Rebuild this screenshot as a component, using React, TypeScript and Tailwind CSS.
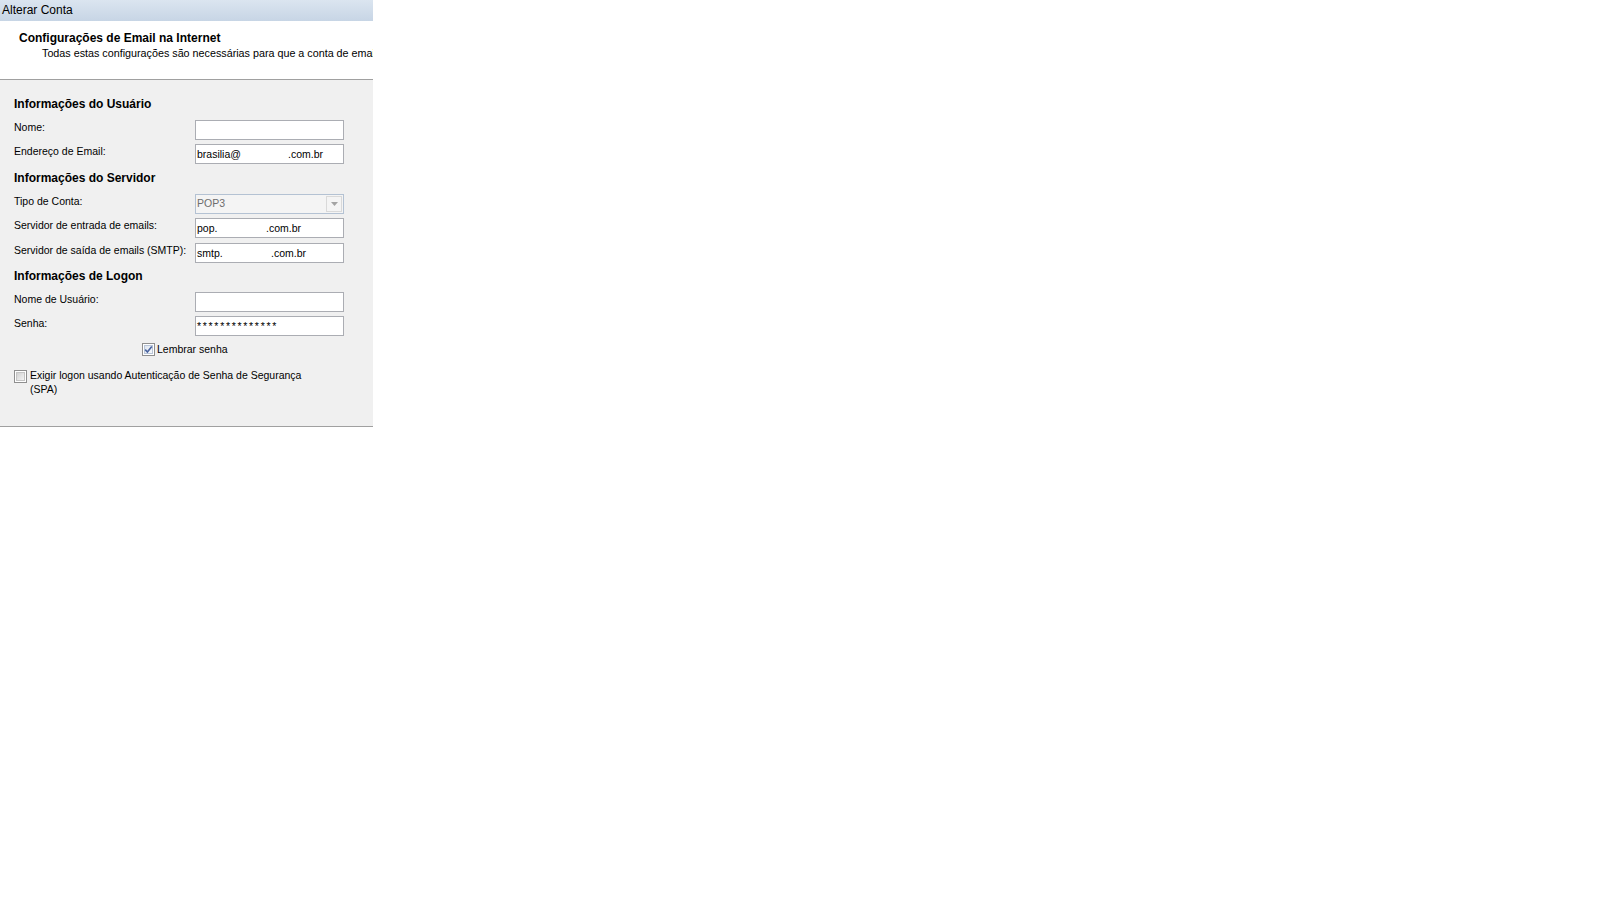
import React from 'react';

const font = { fontFamily: '"Liberation Sans", Arial, sans-serif' };

const TextBox: React.FC<{ children?: React.ReactNode; className?: string }> = ({ children, className = '' }) => (
  <div
    className={`h-[20px] w-[149px] border border-[#abadb3] bg-white pl-[1px] text-[10.5px] leading-[18px] text-black whitespace-nowrap overflow-hidden ${className}`}
  >
    {children}
  </div>
);

const SectionTitle: React.FC<{ children: React.ReactNode; className?: string }> = ({ children, className = '' }) => (
  <div className={`text-[12px] leading-[14px] font-bold text-black ${className}`}>{children}</div>
);

const Row: React.FC<{ label: string; className?: string; children: React.ReactNode }> = ({ label, className = '', children }) => (
  <div className={`flex items-start ${className}`}>
    <div className="w-[181px] text-[10.5px] leading-[14px] text-black whitespace-nowrap">{label}</div>
    {children}
  </div>
);

const CheckBox: React.FC<{ checked?: boolean }> = ({ checked }) => (
  <div className="h-[13px] w-[13px] shrink-0 border border-[#8f8f8f] bg-white p-[1px]">
    <div
      className={`relative h-full w-full border ${
        checked
          ? 'border-[#b9c5d8] bg-gradient-to-br from-[#dfe6f0] to-[#f7f9fc]'
          : 'border-[#c4c4c4] bg-gradient-to-br from-[#d2d2d2] to-[#f4f4f4]'
      }`}
    >
      {checked && (
        <svg viewBox="0 0 9 9" className="absolute -left-[1px] -top-[1px] h-[9px] w-[9px]">
          <path d="M1.2 4.6 L3.4 7 L7.8 1.4" fill="none" stroke="#4a64a0" strokeWidth="1.6" />
        </svg>
      )}
    </div>
  </div>
);

export default function App() {
  return (
    <div className="min-h-[900px] w-full bg-white" style={font}>
      <div className="w-[373px] overflow-hidden">
        {/* title bar */}
        <div className="h-[21px] bg-gradient-to-b from-[#dbe5f0] to-[#c7d5e5] pl-[2px] text-[12px] leading-[20px] text-black">
          Alterar Conta
        </div>

        {/* header */}
        <div className="h-[58px] bg-white pt-[10px]">
          <div className="pl-[19px] text-[12px] leading-[14px] font-bold text-black whitespace-nowrap">
            Configurações de Email na Internet
          </div>
          <div className="mt-[1px] pl-[42px] text-[10.75px] leading-[14px] text-black whitespace-nowrap">
            Todas estas configurações são necessárias para que a conta de email funcione.
          </div>
        </div>

        {/* body */}
        <div className="border-y border-[#a0a0a0] bg-[#f0f0f0] pl-[14px] pt-[17px] h-[348px]">
          <SectionTitle>Informações do Usuário</SectionTitle>
          <Row label="Nome:" className="mt-[9px]">
            <TextBox />
          </Row>
          <Row label="Endereço de Email:" className="mt-[4px]">
            <TextBox>
              <span className="inline-block w-[91px]">brasilia@</span>.com.br
            </TextBox>
          </Row>

          <SectionTitle className="mt-[7px]">Informações do Servidor</SectionTitle>
          <Row label="Tipo de Conta:" className="mt-[9px]">
            <div className="flex h-[20px] w-[149px] items-center border border-[#b4c2d3] bg-[#f4f4f4] pl-[1px] text-[10.5px] text-[#6d6d6d]">
              <span className="flex-1">POP3</span>
              <div className="mr-[1px] flex h-[16px] w-[16px] items-center justify-center border border-[#d9d9d9] bg-[#f4f4f4]">
                <svg viewBox="0 0 7 4" className="h-[4px] w-[7px]">
                  <path d="M0 0 H7 L3.5 4 Z" fill="#a3a3a3" />
                </svg>
              </div>
            </div>
          </Row>
          <Row label="Servidor de entrada de emails:" className="mt-[4px]">
            <TextBox>
              <span className="inline-block w-[69px]">pop.</span>.com.br
            </TextBox>
          </Row>
          <Row label="Servidor de saída de emails (SMTP):" className="mt-[5px]">
            <TextBox>
              <span className="inline-block w-[74px]">smtp.</span>.com.br
            </TextBox>
          </Row>

          <SectionTitle className="mt-[6px]">Informações de Logon</SectionTitle>
          <Row label="Nome de Usuário:" className="mt-[9px]">
            <TextBox />
          </Row>
          <Row label="Senha:" className="mt-[4px]">
            <TextBox className="tracking-[1.7px] text-[#1a2a4a]">**************</TextBox>
          </Row>

          <div className="mt-[6px] flex items-center pl-[128px]">
            <CheckBox checked />
            <span className="ml-[2px] text-[10.5px] leading-[14px] text-black">Lembrar senha</span>
          </div>

          <div className="mt-[14px] flex items-start">
            <CheckBox />
            <span className="ml-[3px] -mt-[1px] w-[290px] text-[10.5px] leading-[13.5px] text-black">
              Exigir logon usando Autenticação de Senha de Segurança (SPA)
            </span>
          </div>
        </div>
      </div>
    </div>
  );
}
